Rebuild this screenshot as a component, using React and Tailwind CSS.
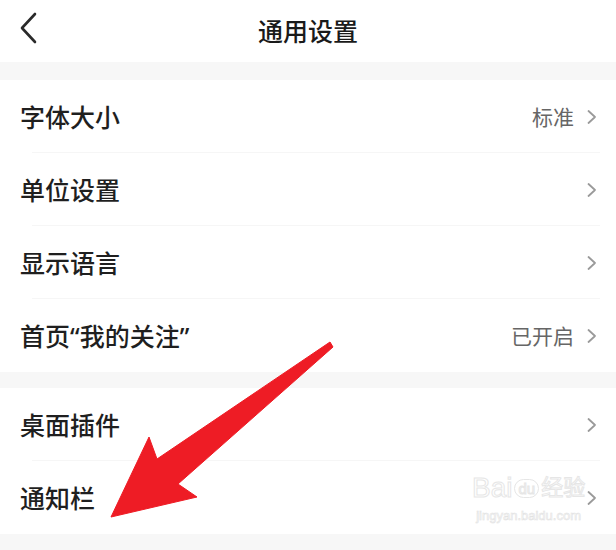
import React from 'react';

const Q = ({ children }) => (
    <span style={{ fontFamily: '"Noto Sans", sans-serif' }}>{children}</span>
);

const groups = [
    [
        { label: '字体大小', value: '标准' },
        { label: '单位设置' },
        { label: '显示语言' },
        { label: <>首页<Q>“</Q>我的关注<Q>”</Q></>, value: '已开启', key: 'home' },
    ],
    [
        { label: '桌面插件' },
        { label: '通知栏' },
    ],
];

const Chevron = () => (
    <svg width="12" height="16" viewBox="0 0 12 16" className="ml-[12px] shrink-0">
        <path d="M2.5 2 L9 8 L2.5 14" fill="none" stroke="#9a9a9a" strokeWidth="1.8" strokeLinecap="round" strokeLinejoin="round" />
    </svg>
);

const Row = ({ label, value, last }) => (
    <div className="h-[73px] flex items-center pl-[20px] pr-[18px] relative">
        <span className="text-[25px] font-medium text-[#1f1f1f] flex-1 leading-none">{label}</span>
        {value && <span className="text-[21px] text-[#666666] leading-none">{value}</span>}
        <Chevron />
        {!last && <div className="absolute left-[32px] right-[16px] bottom-0 h-px bg-[#f6f6f6]" />}
    </div>
);

const App = () => {
    return (
        <div
            className="relative w-[616px] h-[550px] overflow-hidden bg-[#f7f7f7]"
            style={{ fontFamily: '"Noto Sans CJK SC", "Noto Sans", sans-serif' }}
        >
            {/* header */}
            <div className="h-[62px] bg-white flex items-center relative">
                <svg width="22" height="32" viewBox="0 0 22 32" className="absolute left-[18px] top-[12px]">
                    <path d="M17 2 L4 16 L17 30" fill="none" stroke="#2a2a2a" strokeWidth="2.6" strokeLinecap="round" strokeLinejoin="round" />
                </svg>
                <h1 className="w-full text-center text-[25px] font-medium text-[#1a1a1a] leading-none -mt-[2px]">通用设置</h1>
            </div>

            <div className="h-[18px]" />
            <div className="bg-white">
                {groups[0].map((r, i) => (
                    <Row key={r.key || r.label} {...r} last={i === groups[0].length - 1} />
                ))}
            </div>

            <div className="h-[16px]" />
            <div className="bg-white">
                {groups[1].map((r, i) => (
                    <Row key={r.label} {...r} last={i === groups[1].length - 1} />
                ))}
            </div>

            {/* watermark */}
            <div className="absolute left-[472px] top-[474px] flex flex-col items-center pointer-events-none">
                <div className="flex items-center text-[28px] leading-none text-transparent [-webkit-text-stroke:1px_#e6e6e6]" style={{ fontFamily: '"Liberation Sans", "Noto Sans CJK SC", sans-serif' }}>
                    <span>Bai</span>
                    <span className="text-[15px] border border-[#e6e6e6] rounded-full px-[3px] py-[1px] mx-[2px]">du</span>
                    <span className="text-[22px]">经验</span>
                </div>
                <span className="text-[13px] mt-[4px] text-transparent [-webkit-text-stroke:0.6px_#e2e2e2]" style={{ fontFamily: '"Liberation Sans", sans-serif' }}>jingyan.baidu.com</span>
            </div>

            {/* red arrow */}
            <svg className="absolute inset-0 pointer-events-none" width="616" height="550" viewBox="0 0 616 550">
                <polygon
                    points="330,342 157,459 149,437 111,517 197,497 178,484 333,347"
                    fill="#ee1c25"
                    stroke="#ee1c25"
                    strokeWidth="1"
                    strokeLinejoin="round"
                />
            </svg>
        </div>
    );
};

export default App;
